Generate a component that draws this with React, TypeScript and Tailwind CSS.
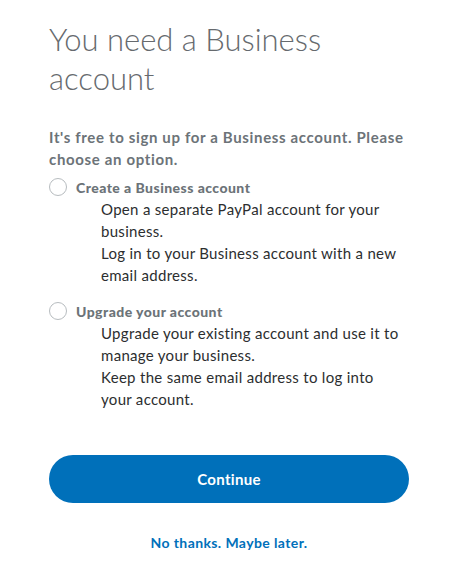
import React from "react";

function Radio() {
  return (
    <span className="mt-[1px] block h-[18px] w-[18px] shrink-0 rounded-full border border-[#b7bcbf] bg-white" />
  );
}

function Option({ title, lines }: { title: string; lines: string[] }) {
  return (
    <div>
      <div className="flex h-[21px] items-start gap-[9px]">
        <Radio />
        <span className="whitespace-nowrap text-[14px] font-black leading-[21px] tracking-[0.45px] text-[#6c7378]">
          {title}
        </span>
      </div>
      <div className="pl-[52px] text-[15px] leading-[22px] tracking-[0.3px] text-[#2c2e2f]">
        {lines.map((l, i) => (
          <div key={i} className="whitespace-nowrap">
            {l}
          </div>
        ))}
      </div>
    </div>
  );
}

export default function App() {
  return (
    <div
      className="min-h-[578px] w-[458px] bg-white px-[49px] pt-[20px]"
      style={{ fontFamily: "Lato, 'Liberation Sans', sans-serif" }}
    >
      <h1 className="text-[31px] font-light leading-[39px] text-[#666a6e]">
        You need a Business
        <br />
        account
      </h1>
      <p className="mt-[28px] whitespace-nowrap text-[15px] font-bold leading-[22px] tracking-[0.65px] text-[#6c7378]">
        It's free to sign up for a Business account. Please
        <br />
        choose an option.
      </p>
      <div className="mt-[7px] flex flex-col gap-[15px]">
        <Option
          title="Create a Business account"
          lines={[
            "Open a separate PayPal account for your",
            "business.",
            "Log in to your Business account with a new",
            "email address.",
          ]}
        />
        <Option
          title="Upgrade your account"
          lines={[
            "Upgrade your existing account and use it to",
            "manage your business.",
            "Keep the same email address to log into",
            "your account.",
          ]}
        />
      </div>
      <button className="mt-[45px] flex h-[48px] w-full items-center justify-center rounded-full bg-[#0070ba] text-[15px] font-bold tracking-[0.3px] text-white">
        Continue
      </button>
      <div className="mt-[30px] text-center text-[14px] font-bold leading-[20px] tracking-[0.4px] text-[#0070ba]">
        No thanks. Maybe later.
      </div>
    </div>
  );
}
